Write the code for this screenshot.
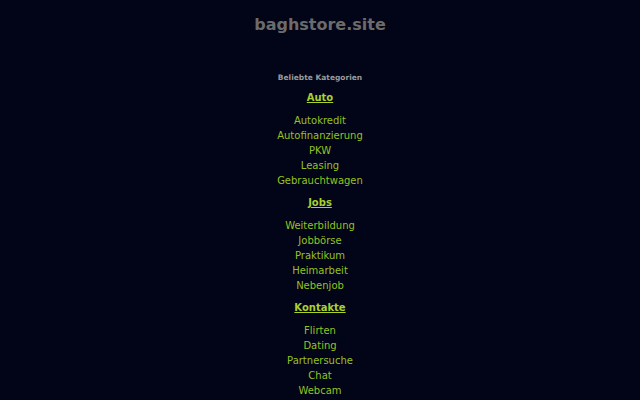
const categories = [
  { title: "Auto", links: ["Autokredit", "Autofinanzierung", "PKW", "Leasing", "Gebrauchtwagen"] },
  { title: "Jobs", links: ["Weiterbildung", "Jobbörse", "Praktikum", "Heimarbeit", "Nebenjob"] },
  { title: "Kontakte", links: ["Flirten", "Dating", "Partnersuche", "Chat", "Webcam"] },
];

export default function App() {
  return (
    <div className="min-h-[400px] w-full bg-[#020417] text-center font-['DejaVu_Sans',sans-serif]">
      <h1 className="pt-[15px] text-[16px] font-bold leading-[20px] text-[#6b6b6b]">baghstore.site</h1>
      <div className="mt-[38px]">
        <h2 className="text-[7.5px] font-bold leading-[10px] text-[#9a9a9a]">Beliebte Kategorien</h2>
        <div>
          {categories.map((cat) => (
            <div key={cat.title} className="mt-[7px]">
              <a className="block text-[10px] font-bold leading-[15px] text-[#a8d130] underline">{cat.title}</a>
              <ul className="mt-[8px]">
                {cat.links.map((link) => (
                  <li key={link} className="text-[10px] leading-[15px] text-[#95c21f]">{link}</li>
                ))}
              </ul>
            </div>
          ))}
        </div>
      </div>
    </div>
  );
}
